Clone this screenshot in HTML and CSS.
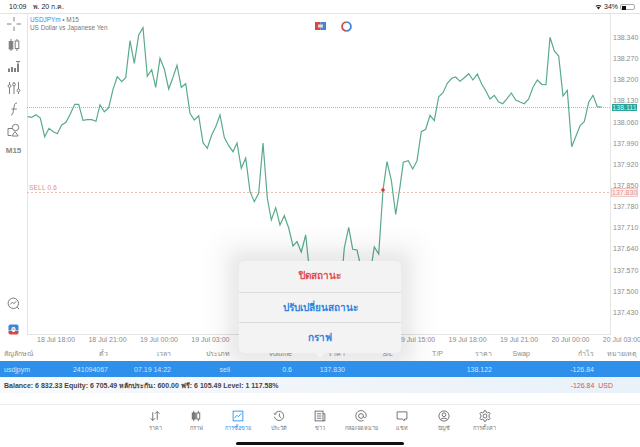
FILE: index.html
```html
<!DOCTYPE html>
<html>
<head>
    <title>USDJPYm M15</title>
    <link rel="stylesheet" href="styles.css">
</head>
<body>
    <div class="status-bar">
        <span class="clock">10:09</span>
        <span class="date">พ. 20 ก.ค.</span>
        <span class="status-right">
            <svg class="wifi" viewBox="0 0 10 8"><path d="M0.5 2.6C3 0.5 7 0.5 9.5 2.6L8.4 3.8C6.4 2.2 3.6 2.2 1.6 3.8ZM2.6 4.6C4 3.5 6 3.5 7.4 4.6L5 7.4Z"/></svg>
            <span>34%</span>
            <span class="battery"><span class="battery-level"></span></span>
        </span>
    </div>

    <div class="chart-row">
        <div class="tools">
            <svg class="tool" viewBox="0 0 14 14"><path d="M7 0V4.5M7 9.5V14M0 7H4.5M9.5 7H14"/></svg>
            <svg class="tool" viewBox="0 0 14 14"><path d="M4 1V13M10 1V13"/><rect class="fill" x="2.2" y="3.5" width="3.6" height="7.5"/><rect class="white" x="8.2" y="3" width="3.6" height="7.5"/></svg>
            <svg class="tool" viewBox="0 0 14 14"><path class="thick" d="M2 13V9.5M5 13V8M8 13V9M11 13V5"/><path d="M9 2.5H13M11 2.5V6"/></svg>
            <svg class="tool" viewBox="0 0 14 14"><path d="M2.5 1V13M7 1V13M11.5 1V13"/><circle class="white" cx="2.5" cy="5" r="1.4"/><circle class="white" cx="7" cy="3.5" r="1.4"/><circle class="white" cx="11.5" cy="9.5" r="1.4"/></svg>
            <svg class="tool" viewBox="0 0 14 14"><path d="M4 13C5.6 13 5.8 12 6.2 9.5L7.2 4C7.6 2 8.2 1 10 1M4.5 7H9.8"/></svg>
            <svg class="tool" viewBox="0 0 14 14"><path d="M5 5.5H1V12.5H4"/><circle cx="8.5" cy="4.5" r="3.2"/><path d="M8 8.5L4.8 13H11.2Z"/></svg>
            <span class="period">M15</span>
            <span class="tools-gap"></span>
            <svg class="tool tool-big" viewBox="0 0 14 14"><circle cx="6.8" cy="6.8" r="5.6"/><path d="M3.5 8L5.8 5.5L7.5 7.2L10 4.5M11 11L13 13"/></svg>
            <svg class="logo" viewBox="0 0 12 12"><path class="logo-blue" d="M2 0.5H10L11.5 2V7H0.5V2Z"/><path class="logo-red" d="M0.5 7.5H4L6 9L8 7.5H11.5V10L10 11.5H2L0.5 10Z"/><circle class="logo-dot" cx="6" cy="5.6" r="2.3"/><path class="logo-mark" d="M4.8 5.6H7.2"/></svg>
        </div>

        <div class="plot">
            <div class="symbol"><span class="symbol-name">USDJPYm</span> <span class="symbol-dot">•</span> M15</div>
            <div class="symbol-desc">US Dollar vs Japanese Yen</div>
            <svg class="one-click" viewBox="0 0 11 8"><rect class="logo-red" width="5.5" height="8"/><rect class="logo-blue" x="5.5" width="5.5" height="8"/><rect class="one-click-mark" x="3" y="2.5" width="5" height="3"/></svg>
            <svg class="ring" viewBox="0 0 12 12"><path class="ring-red" d="M6 1.2A4.8 4.8 0 0 0 6 10.8"/><path class="ring-blue" d="M6 1.2A4.8 4.8 0 0 1 6 10.8"/></svg>
            <svg class="plot-lines" width="584" height="322" viewBox="27 13 584 322">
                <line class="bid-line" x1="27" y1="107.5" x2="611" y2="107.5"/>
                <line class="sell-line" x1="27" y1="192.5" x2="611" y2="192.5"/>
                <polyline class="price-line" points="27.7,116.7 31.7,117.3 36,114.7 40.3,118 44.7,136.7 49,128.3 53.3,131.7 57.3,133.7 61.7,125 66,122.3 70.3,114 74.7,104.3 78.7,104.3 83,120.3 87.3,119.7 91.7,119.7 96,121.3 100,104.7 104.3,111.7 108.7,107.7 113,89.3 117.3,76.7 121.7,81.7 125.7,77.7 130,40.7 134.3,63.3 138.7,35 143,27.7 147.3,76.3 151.7,69.7 155.7,87.3 160,58.3 164.3,69 168.7,89 173,77.3 177,65.3 181.3,87.3 185.7,83.7 190,113.3 194.3,120 198.7,115.7 203,142.7 207.3,148.3 211.7,135 215.7,126.7 220,115 224.3,137.3 228.7,145.7 233,151.7 237,143 241.3,168.3 245.7,158 250,191.7 254.3,201.7 258.7,193 263,143 267.3,198 271.3,220 275.7,207.7 280,225 284.3,215.7 288.7,228 293,246 297,241.7 301.3,252 305.7,235 308.3,260 312,272 340,272 343.3,260 344.3,248 348.7,227.3 352.7,249.3 357,250 359.3,260 362,272 370,272 372.3,260 374.3,247 378.7,254 383,190 387,161.7 391.3,180 395.7,214.3 400,186.7 403.3,162.3 408.3,160.7 412.7,169 417,160.7 421.3,131.7 425.7,129.3 430,115.3 434.3,120.7 438.7,96.7 443,92.7 447.3,83.3 451.7,78.3 455.7,77 460,81.3 464.3,77.7 468.7,73.7 473,80 477.3,74 481.7,84 485.7,90.7 490,99 494.3,95.3 498.7,102 502.7,103.7 507,98.7 511.3,93 515.7,100 520,102 524.3,103.7 528.7,99 533,87.3 537.3,80 541.7,84.3 546,84.7 550,37.3 554.3,51 558.7,56 563,96 567.3,90.3 571.7,146.7 576,136 580.3,125.3 584.3,121.7 588.7,102.3 593,95.3 597.3,106.7 601.7,107"/>
                <circle class="sell-dot" cx="383" cy="190" r="1.8"/>
            </svg>
            <div class="sell-label">SELL 0.6</div>
        </div>

        <div class="price-axis">
            <span>138.340</span>
            <span>138.270</span>
            <span>138.200</span>
            <span>138.130</span>
            <span>138.060</span>
            <span>137.990</span>
            <span>137.920</span>
            <span>137.850</span>
            <span>137.780</span>
            <span>137.710</span>
            <span>137.640</span>
            <span>137.570</span>
            <span>137.500</span>
            <span>137.430</span>
            <span class="price-tag bid-tag">138.111</span>
            <span class="price-tag sell-tag">137.830</span>
        </div>
    </div>

    <div class="time-axis">
        <span>18 Jul 18:00</span>
        <span>18 Jul 21:00</span>
        <span>19 Jul 00:00</span>
        <span>19 Jul 03:00</span>
        <span></span>
        <span></span>
        <span></span>
        <span>19 Jul 15:00</span>
        <span>19 Jul 18:00</span>
        <span>19 Jul 21:00</span>
        <span>20 Jul 00:00</span>
        <span>20 Jul 03:00</span>
    </div>

    <div class="trade-table">
        <div class="trade-row trade-head">
            <span>สัญลักษณ์</span>
            <span>ตั๋ว</span>
            <span>เวลา</span>
            <span>ประเภท</span>
            <span>Volume</span>
            <span>ราคา</span>
            <span>S/L</span>
            <span>T/P</span>
            <span>ราคา</span>
            <span>Swap</span>
            <span>กำไร</span>
            <span>หมายเหตุ</span>
        </div>
        <div class="trade-row trade-selected">
            <span>usdjpym</span>
            <span>241094067</span>
            <span>07.19 14:22</span>
            <span>sell</span>
            <span>0.6</span>
            <span>137.830</span>
            <span></span>
            <span></span>
            <span>138.122</span>
            <span></span>
            <span>-126.84</span>
            <span></span>
        </div>
        <div class="balance-row">
            <span>Balance: 6 832.33 Equity: 6 705.49 หลักประกัน: 600.00 ฟรี: 6 105.49 Level: 1 117.58%</span>
            <span class="balance-profit">-126.84&nbsp; USD</span>
        </div>
    </div>

    <div class="tab-bar">
        <div class="tab">
            <svg viewBox="0 0 16 16"><path d="M5 3V14M2 11L5 14L8 11M11 13V2M8 5L11 2L14 5"/></svg>
            <span>ราคา</span>
        </div>
        <div class="tab">
            <svg viewBox="0 0 16 16"><path d="M5 1V15M11 1V15"/><rect class="fill" x="3" y="4" width="4" height="8"/><rect class="white" x="9" y="4" width="4" height="8"/></svg>
            <span>กราฟ</span>
        </div>
        <div class="tab tab-active">
            <svg viewBox="0 0 16 16"><rect x="1.5" y="1.5" width="13" height="13"/><path d="M3.5 10.5L6.5 7L8.5 9L12.5 4.5"/></svg>
            <span>การซื้อขาย</span>
        </div>
        <div class="tab">
            <svg viewBox="0 0 16 16"><path d="M2.6 5A6.2 6.2 0 1 1 2 9M0.8 4.4L2.8 6.2L4.8 4.4M8.5 4.5V8.5L11 10.5"/></svg>
            <span>ประวัติ</span>
        </div>
        <div class="tab">
            <svg viewBox="0 0 16 16"><rect x="1.5" y="1.5" width="10.5" height="13"/><path d="M12 5H14.5V14.5H12M3.8 5H9.8M3.8 8H9.8M3.8 11H9.8"/></svg>
            <span>ข่าว</span>
        </div>
        <div class="tab">
            <svg viewBox="0 0 16 16"><path d="M11.5 13.8A7 7 0 1 1 15 8C15 10.8 11.2 11 11.2 8"/><circle cx="8" cy="8" r="3.2"/></svg>
            <span>กล่องจดหมาย</span>
        </div>
        <div class="tab">
            <svg viewBox="0 0 16 16"><path d="M1.5 2.5H14.5V12H11.5L10.8 14.5L8.5 12H1.5Z"/></svg>
            <span>แชท</span>
        </div>
        <div class="tab">
            <svg viewBox="0 0 16 16"><circle cx="8" cy="8" r="6.8"/><circle cx="8" cy="6.3" r="2.5"/><path d="M3.5 12.8C4.5 10.2 11.5 10.2 12.5 12.8"/></svg>
            <span>บัญชี</span>
        </div>
        <div class="tab">
            <svg viewBox="0 0 16 16"><path d="M6.8 1H9.2L9.7 3.1L11.4 3.9L13.3 2.9L14.9 5L13.4 6.5V9.5L14.9 11L13.3 13.1L11.4 12.1L9.7 12.9L9.2 15H6.8L6.3 12.9L4.6 12.1L2.7 13.1L1.1 11L2.6 9.5V6.5L1.1 5L2.7 2.9L4.6 3.9L6.3 3.1Z"/><circle cx="8" cy="8" r="2.6"/></svg>
            <span>การตั้งค่า</span>
        </div>
    </div>
    <div class="home-row"><span class="home-indicator"></span></div>

    <div class="popup">
        <div class="popup-item popup-danger">ปิดสถานะ</div>
        <div class="popup-item">ปรับเปลี่ยนสถานะ</div>
        <div class="popup-item">กราฟ</div>
    </div>
</body>
</html>
```

FILE: styles.css
```css
html, body {
    margin: 0;
    padding: 0;
}
body {
    position: relative;
    width: 640px;
    height: 447px;
    overflow: hidden;
    background: #fff;
    font-family: "Liberation Sans", "Noto Sans", sans-serif;
    color: #333;
}

/* status bar */
.status-bar {
    display: flex;
    align-items: center;
    height: 13px;
    padding: 0 5px 0 9px;
    font-size: 7px;
    color: #222;
}
.clock {
    margin-right: 6px;
}
.status-right {
    display: flex;
    align-items: center;
    gap: 2px;
    margin-left: auto;
}
.wifi {
    width: 7px;
    height: 6px;
    fill: #222;
}
.battery {
    display: block;
    width: 15px;
    height: 6px;
    padding: 1px;
    border: 1px solid #aaa;
    border-radius: 2px;
    box-sizing: border-box;
}
.battery-level {
    display: block;
    width: 4px;
    height: 4px;
    background: #111;
}

/* chart */
.chart-row {
    display: flex;
    height: 322px;
    border-top: 1px solid #e4e4e4;
    box-sizing: border-box;
}
.tools {
    display: flex;
    flex-direction: column;
    align-items: center;
    width: 27px;
    padding-top: 3px;
    box-sizing: border-box;
    gap: 7.2px;
}
.tool {
    flex: none;
    width: 14px;
    height: 14px;
    fill: none;
    stroke: #808080;
    stroke-width: 1;
}
.tool-big {
    width: 13px;
    height: 13px;
    stroke: #707070;
    margin-bottom: 7px;
}
.fill {
    fill: #808080;
}
.white {
    fill: #fff;
}
.thick {
    stroke-width: 2;
}
.period {
    margin-top: 1px;
    font-size: 8px;
    font-weight: bold;
    color: #888;
    line-height: 12px;
}
.tools-gap {
    flex: 1;
}
.logo {
    flex: none;
    width: 11px;
    height: 11px;
}
.logo-blue {
    fill: #3d86d9;
}
.logo-red {
    fill: #cf4b43;
}
.logo-dot {
    fill: #fff;
}
.logo-mark {
    stroke: #cf4b43;
    stroke-width: 1;
}
.plot {
    position: relative;
    width: 584px;
    flex: none;
    border-left: 1px solid #e4e4e4;
    border-right: 1px solid #e4e4e4;
    border-bottom: 1px solid #e4e4e4;
    box-sizing: border-box;
}
.plot-lines {
    position: absolute;
    top: -1px;
    left: -1px;
}
.symbol {
    position: relative;
    z-index: 1;
    padding: 1px 0 0 2px;
    font-size: 6.4px;
    line-height: 9px;
    color: #777;
}
.symbol-name {
    color: #2f8fe6;
}
.symbol-dot {
    color: #2f8fe6;
}
.symbol-desc {
    position: relative;
    z-index: 1;
    padding: 0 0 0 2px;
    font-size: 6.4px;
    line-height: 8px;
    color: #777;
}
.one-click {
    position: absolute;
    top: 8px;
    left: 287px;
    width: 11px;
    height: 8px;
}
.one-click-mark {
    fill: #e9d6d8;
}
.ring {
    position: absolute;
    top: 7px;
    left: 313px;
    width: 11px;
    height: 11px;
    fill: none;
    stroke-width: 2;
}
.ring-red {
    stroke: #cf4b43;
}
.ring-blue {
    stroke: #3d86d9;
}
.price-line {
    fill: none;
    stroke: #5aab8b;
    stroke-width: 1.2;
}
.bid-line {
    stroke: #7fd0b4;
    stroke-width: 1;
    stroke-dasharray: 1 1;
}
.sell-line {
    stroke: #efbdb6;
    stroke-width: 1;
    stroke-dasharray: 2 2;
}
.sell-dot {
    fill: #d8352f;
}
.sell-label {
    position: absolute;
    top: 170px;
    left: 1px;
    font-size: 6.5px;
    color: #e28a84;
    letter-spacing: 0.2px;
}

/* price axis */
.price-axis {
    position: relative;
    flex: 1;
    display: flex;
    flex-direction: column;
    padding: 20px 0 0 2px;
    font-size: 7px;
    color: #8c8c8c;
}
.price-axis span {
    flex: none;
    height: 21.15px;
    line-height: 8px;
}
.price-axis .price-tag {
    position: absolute;
    left: 1px;
    height: 7px;
    width: 25px;
    line-height: 7px;
    text-align: center;
}
.price-axis .bid-tag {
    top: 90px;
    background: #2aa498;
    color: #d8f2ee;
}
.price-axis .sell-tag {
    top: 175px;
    background: #fdeeed;
    color: #e08f88;
    outline: 1px solid #f3c6c2;
}

/* time axis */
.time-axis {
    display: flex;
    height: 6px;
    padding: 1px 0 0 37px;
    font-size: 7px;
    line-height: 7px;
    color: #8c8c8c;
    white-space: nowrap;
}
.time-axis span {
    flex: none;
    width: 51.45px;
}

/* trades */
.trade-row {
    display: grid;
    grid-template-columns: 60px 48px 63px 59px 62px 53px 48px 50px 49px 38px 64px 43px;
    align-items: center;
    font-size: 7px;
    text-align: right;
    box-sizing: border-box;
}
.trade-row span:first-child {
    text-align: left;
    padding-left: 4px;
}
.trade-head {
    height: 19px;
    padding-top: 3px;
    color: #8c8c8c;
    white-space: nowrap;
}
.trade-selected {
    position: relative;
    z-index: 2;
    height: 16px;
    background: #2e90ea;
    color: #cfe5fa;
}
.balance-row {
    position: relative;
    z-index: 2;
    display: flex;
    justify-content: space-between;
    align-items: center;
    height: 16px;
    padding: 0 27px 0 4px;
    font-size: 7px;
    font-weight: bold;
    color: #444;
    background: linear-gradient(to right, #f8f9fb, #e9f1f9);
}
.balance-profit {
    color: #d9534f;
    font-weight: normal;
}

/* tabs */
.tab-bar {
    display: flex;
    justify-content: center;
    margin-top: 11px;
    height: 38px;
    padding-top: 5px;
    border-top: 1px solid #ececec;
    box-sizing: border-box;
}
.tab {
    display: flex;
    flex-direction: column;
    align-items: center;
    gap: 3px;
    width: 41.2px;
    font-size: 5.5px;
    line-height: 7px;
    color: #777;
    white-space: nowrap;
}
.tab svg {
    width: 12px;
    height: 12px;
    fill: none;
    stroke: #666;
    stroke-width: 1.2;
}
.tab-active {
    color: #2e90ea;
}
.tab-active svg {
    stroke: #2e90ea;
}
.home-row {
    display: flex;
    justify-content: center;
}
.home-indicator {
    display: block;
    width: 168px;
    height: 3px;
    border-radius: 2px;
    background: #111;
}

/* action popup */
.popup {
    position: absolute;
    z-index: 1;
    top: 261px;
    left: 239px;
    width: 162px;
    border-radius: 5px;
    background: #f3f3f4;
    box-shadow: 0 0 14px 10px rgba(0, 0, 0, 0.055), 0 0 22px 24px rgba(0, 0, 0, 0.035);
}
.popup::after {
    content: "";
    position: absolute;
    left: 76px;
    bottom: -5px;
    border-left: 5px solid transparent;
    border-right: 5px solid transparent;
    border-top: 5px solid #f3f3f4;
}
.popup-item {
    height: 30.6px;
    line-height: 30px;
    text-align: center;
    font-size: 10px;
    font-weight: bold;
    color: #2e86e0;
    border-top: 1px solid #dcdcdc;
    box-sizing: border-box;
}
.popup-item:first-child {
    border-top: 0;
}
.popup-danger {
    color: #e2504a;
}
```
